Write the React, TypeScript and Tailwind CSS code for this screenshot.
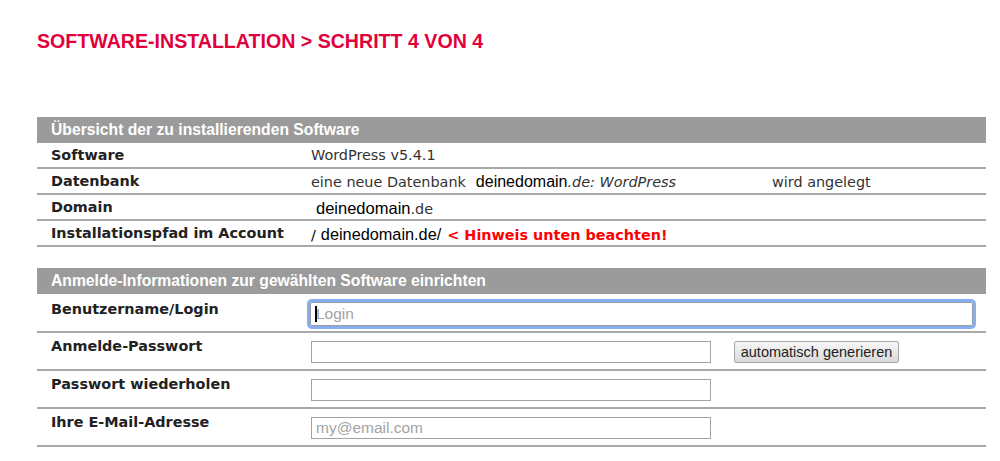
import React from 'react'

// Installation wizard, last step: overview + login data
const verdana = "font-['DejaVu_Sans',Verdana,sans-serif]"
const helv = "font-['Liberation_Sans',Arial,sans-serif]"

const overview = [
  { label: 'Software', value: 'software' },
  { label: 'Datenbank', value: 'datenbank' },
  { label: 'Domain', value: 'domain' },
  { label: 'Installationspfad im Account', value: 'pfad' },
]

function Header({ children }: { children: React.ReactNode }) {
  return (
    <div className={`h-[26px] bg-[#9b9b9b] pl-[14px] flex items-center text-white font-bold text-[15.7px] ${helv}`}>
      {children}
    </div>
  )
}

function OverviewValue({ kind }: { kind: string }) {
  if (kind === 'software') return <span>WordPress v5.4.1</span>
  if (kind === 'datenbank')
    return (
      <div className="flex items-baseline">
        <div className="w-[461px] flex items-baseline">
          <span>eine neue Datenbank</span>
          <span className={`ml-[10px] text-[16px] text-black ${helv}`}>deinedomain</span>
          <span className="italic">.de: WordPress</span>
        </div>
        <span>wird angelegt</span>
      </div>
    )
  if (kind === 'domain')
    return (
      <div className="flex items-baseline pl-[5px]">
        <span className={`text-[16.5px] text-black ${helv}`}>deinedomain</span>
        <span>.de</span>
      </div>
    )
  return (
    <div className="flex items-baseline">
      <span className="text-black">/</span>
      <span className={`ml-[5px] text-[16.3px] text-black ${helv}`}>deinedomain.de/</span>
      <span className="ml-[6px] font-bold text-[#ff0000]">&lt; Hinweis unten beachten!</span>
    </div>
  )
}

export default function App() {
  return (
    <div className={`w-[1000px] h-[461px] bg-white overflow-hidden ${verdana}`}>
      <div className="pl-[37px] pt-[29px]">
        <h1 className={`h-[24px] leading-[24px] text-[19.6px] font-bold text-[#e1003c] ${helv}`}>
          SOFTWARE-INSTALLATION &gt; SCHRITT 4 VON 4
        </h1>

        {/* ── ÜBERSICHT ── */}
        <div className="mt-[64px] w-[949px]">
          <Header>Übersicht der zu installierenden Software</Header>
          {overview.map((row) => (
            <div key={row.label} className="h-[26px] pt-[2px] border-b-2 border-[#a9a9a9] flex items-center text-[14.4px]">
              <div className="w-[274px] pl-[14px] font-bold text-[#222]">{row.label}</div>
              <div className="text-[#333]">
                <OverviewValue kind={row.value} />
              </div>
            </div>
          ))}
        </div>

        {/* ── ANMELDE-INFORMATIONEN ── */}
        <div className="mt-[21px] w-[949px]">
          <Header>Anmelde-Informationen zur gewählten Software einrichten</Header>

          <div className="h-[39px] border-b-2 border-[#a9a9a9] flex items-start text-[14.4px]">
            <div className="w-[273px] pl-[14px] pt-[7px] leading-[17px] font-bold text-[#222]">Benutzername/Login</div>
            <div className="relative mt-[8px]">
              <input
                placeholder="Login"
                className={`w-[663px] h-[24px] border border-[#9d9d9d] rounded-[2px] outline-none ring-[3px] ring-[#85aef5] pl-[5px] text-[15.5px] placeholder:text-[#a3a3a3] ${helv}`}
              />
              <span className="absolute left-[5px] top-[4px] w-[1.5px] h-[16px] bg-black" />
            </div>
          </div>

          <div className="h-[38px] border-b-2 border-[#a9a9a9] flex items-start text-[14.4px]">
            <div className="w-[274px] pl-[14px] pt-[5px] leading-[17px] font-bold text-[#222]">Anmelde-Passwort</div>
            <input
              type="password"
              className="mt-[8px] w-[400px] h-[22px] border border-[#a3a3a3] outline-none"
            />
            <button
              className={`mt-[8px] ml-[23px] w-[165px] h-[22px] border border-[#a6a6a6] rounded-[2px] bg-gradient-to-b from-[#f7f7f7] to-[#d9d9d9] text-[14.5px] text-[#222] leading-none ${helv}`}
            >
              automatisch generieren
            </button>
          </div>

          <div className="h-[38px] border-b-2 border-[#a9a9a9] flex items-start text-[14.4px]">
            <div className="w-[274px] pl-[14px] pt-[5px] leading-[17px] font-bold text-[#222]">Passwort wiederholen</div>
            <input
              type="password"
              className="mt-[8px] w-[400px] h-[22px] border border-[#a3a3a3] outline-none"
            />
          </div>

          <div className="h-[38px] border-b-2 border-[#a9a9a9] flex items-start text-[14.4px]">
            <div className="w-[274px] pl-[14px] pt-[5px] leading-[17px] font-bold text-[#222]">Ihre E-Mail-Adresse</div>
            <input
              placeholder="my@email.com"
              className={`mt-[8px] w-[400px] h-[22px] border border-[#a3a3a3] outline-none pl-[4px] text-[15.5px] placeholder:text-[#a3a3a3] ${helv}`}
            />
          </div>
        </div>
      </div>
    </div>
  )
}
